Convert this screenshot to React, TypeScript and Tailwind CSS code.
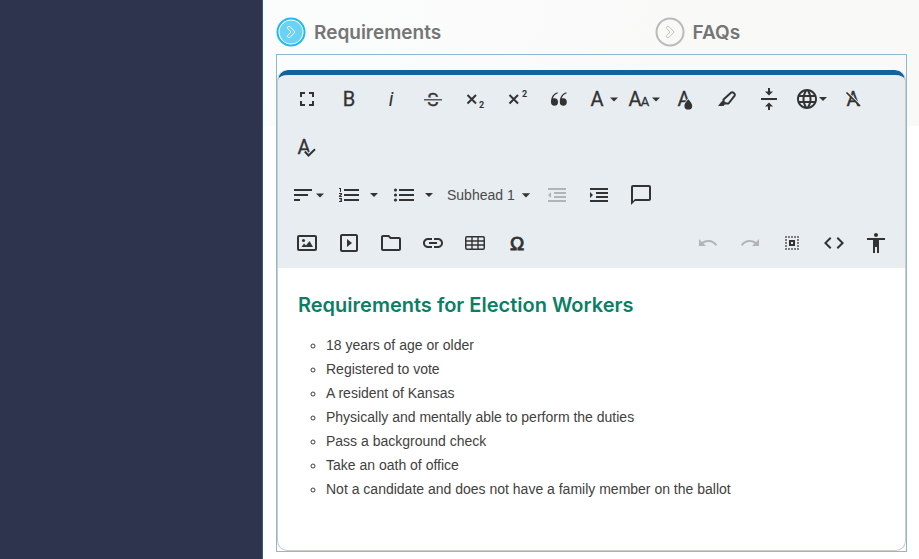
import type { ReactNode } from 'react';
import clsx from 'clsx';
import {
  MdAccessibility,
  MdArrowDropDown,
  MdCode,
  MdFullscreen,
  MdLanguage,
  MdLink,
  MdOutlineChatBubbleOutline,
  MdOutlineFolder,
} from 'react-icons/md';

const requirements = [
  '18 years of age or older',
  'Registered to vote',
  'A resident of Kansas',
  'Physically and mentally able to perform the duties',
  'Pass a background check',
  'Take an oath of office',
  'Not a candidate and does not have a family member on the ballot',
];

function Svg({ children }: { children: ReactNode }) {
  return (
    <svg
      viewBox="0 0 24 24"
      className="h-6 w-6 shrink-0 overflow-visible font-['Roboto',sans-serif]"
      fill="currentColor"
      aria-hidden="true"
    >
      {children}
    </svg>
  );
}

type LetterProps = { x: number; y?: number; size?: number; children: string };

// Regular weight with a hairline stroke sits between Roboto 400 and 500
function Letter({ x, y = 19, size = 20, children }: LetterProps) {
  return (
    <text x={x} y={y} fontSize={size} textAnchor="middle" stroke="currentColor" strokeWidth="0.3">
      {children}
    </text>
  );
}

const BoldIcon = () => (
  <Svg>
    <Letter x={12}>B</Letter>
  </Svg>
);

const ItalicIcon = () => (
  <Svg>
    <text x="12" y="19" fontSize="20" fontStyle="italic" textAnchor="middle">i</text>
  </Svg>
);

const StrikeIcon = () => (
  <Svg>
    <Letter x={12} size={19}>S</Letter>
    <path d="M3 10.500h18v4.500H3z" fill="#e8edf1" />
    <path d="M3 12h18v1.500H3z" opacity=".8" />
  </Svg>
);

const SubscriptIcon = () => (
  <Svg>
    <path d="M4.500 8l8.500 8.500M13 8l-8.500 8.500" stroke="currentColor" strokeWidth="2" />
    <text x="18.500" y="21" fontSize="9" fontWeight="700" textAnchor="middle">2</text>
  </Svg>
);

const SuperscriptIcon = () => (
  <Svg>
    <path d="M4.500 8l8.500 8.500M13 8l-8.500 8.500" stroke="currentColor" strokeWidth="2" />
    <text x="19.500" y="9.500" fontSize="9" fontWeight="700" textAnchor="middle">2</text>
  </Svg>
);

const QuoteIcon = () => (
  <Svg>
    <path d="M10.600 5.200C6.500 6.300 4 9.800 4 15a3.500 3.800 0 1 0 3.500-3.800c-.6 0-1 .1-1.500.3.500-2.300 2.100-4.200 4.800-5.200z" />
    <path d="M19.400 5.200c-4.100 1.100-6.600 4.600-6.600 9.800a3.500 3.800 0 1 0 3.500-3.800c-.6 0-1 .1-1.500.3.500-2.300 2.100-4.200 4.800-5.200z" />
  </Svg>
);

const FontFamilyIcon = () => (
  <Svg>
    <Letter x={8}>A</Letter>
    <path d="M21 10.500h8l-4 4z" />
  </Svg>
);

const FontSizeIcon = () => (
  <Svg>
    <Letter x={4}>A</Letter>
    <Letter x={14} size={13}>A</Letter>
    <path d="M21 10.500h8l-4 4z" />
  </Svg>
);

const TextColorIcon = () => (
  <Svg>
    <Letter x={11}>A</Letter>
    <path
      d="M15.300 12.200c2.200 2.500 3.900 4.500 3.900 6.500a3.900 3.900 0 0 1-7.800 0c0-2 1.700-4 3.900-6.500z"
      stroke="#e8edf1"
      strokeWidth="1.500"
      paintOrder="stroke"
    />
  </Svg>
);

const HighlightIcon = () => (
  <Svg>
    <path
      d="M8.500 12.500L16.200 5.600q1.200-.9 2.300.1l.9.900q1 1.100.1 2.300L13.500 16.500H10.500L8.500 14.500z"
      fill="none"
      stroke="currentColor"
      strokeWidth="2"
      strokeLinejoin="round"
    />
    <path d="M7.200 13.800L10.200 17 8.500 19H3z" />
  </Svg>
);

const LineHeightIcon = () => (
  <Svg>
    <path d="M4 11h16v2H4zM11 1h2v3.500h3L12 8.500 8 4.500h3zM11 23h2v-3.500h3l-4-4-4 4h3z" />
  </Svg>
);

const ClearFormatIcon = () => (
  <Svg>
    <Letter x={12}>A</Letter>
    <path d="M6.800 5.200L20.300 18.700" stroke="#e8edf1" strokeWidth="1.200" />
    <path d="M5.500 5.500L19 19" stroke="currentColor" strokeWidth="1.700" />
  </Svg>
);

const SpellcheckIcon = () => (
  <Svg>
    <Letter x={9}>A</Letter>
    <path d="M9.800 16.500l3.700 4L20 14.300" fill="none" stroke="#e8edf1" strokeWidth="4" />
    <path d="M9.800 16.500l3.700 4L20 14.300" fill="none" stroke="currentColor" strokeWidth="2" />
  </Svg>
);

const AlignIcon = () => (
  <Svg>
    <path d="M-1 6h18v2H-1zM-1 11h14v2H-1zM-1 16h6v2h-6z" />
    <path d="M21 10.500h8l-4 4z" />
  </Svg>
);

const OrderedListIcon = () => (
  <Svg>
    <path d="M7 6h15v2H7zM7 11h15v2H7zM7 16h15v2H7z" />
    <path d="M2 5h2v4H3V6H2zM2 10h3v1.500L3.500 13H5v1H2v-1.200L3.800 11H2zM2 15h3v4H2v-1h2v-.5H3v-1h1V16H2z" />
  </Svg>
);

const BulletListIcon = () => (
  <Svg>
    <path d="M7 6h15v2H7zM7 11h15v2H7zM7 16h15v2H7z" />
    <circle cx="3.500" cy="7" r="1.600" />
    <circle cx="3.500" cy="12" r="1.600" />
    <circle cx="3.500" cy="17" r="1.600" />
  </Svg>
);

const OutdentIcon = () => (
  <Svg>
    <path d="M3 5h18v2H3zM9 9h12v2H9zM9 13h12v2H9zM3 17h18v2H3zM6 9v6l-3-3z" />
  </Svg>
);

const IndentIcon = () => (
  <Svg>
    <path d="M3 5h18v2H3zM9 9h12v2H9zM9 13h12v2H9zM3 17h18v2H3zM3 9v6l3-3z" />
  </Svg>
);

const ImageIcon = () => (
  <Svg>
    <rect x="3" y="5" width="18" height="14" rx="1" fill="none" stroke="currentColor" strokeWidth="2" />
    <circle cx="8.500" cy="9.500" r="1.500" />
    <path d="M6.500 16l2.500-3.500 2 2 3.500-4.500L18 16z" />
  </Svg>
);

const VideoIcon = () => (
  <Svg>
    <rect x="4" y="4" width="16" height="16" rx="1" fill="none" stroke="currentColor" strokeWidth="2" />
    <path d="M10 8v8l5-4z" />
  </Svg>
);

const TableIcon = () => (
  <Svg>
    <rect x="2.750" y="5.750" width="18.500" height="12.500" rx="1.200" fill="none" stroke="currentColor" strokeWidth="1.500" />
    <path d="M3 10h18M3 14h18M9 6v12M15 6v12" stroke="currentColor" strokeWidth="1.400" />
  </Svg>
);

const OmegaIcon = () => (
  <Svg>
    <text
      x="12"
      y="19"
      fontSize="19"
      fontFamily="Liberation Sans, sans-serif"
      stroke="currentColor"
      strokeWidth="0.9"
      textAnchor="middle"
    >
      Ω
    </text>
  </Svg>
);

const UndoIcon = () => (
  <Svg>
    <path d="M3 8v7h7L7.400 12.500c1.400-1 3.100-1.600 4.900-1.600 3.100 0 5.800 1.600 7 3.900l1.900-.9C19.700 10.900 16.300 8.900 12.300 8.900c-2.400 0-4.700.8-6.500 2z" />
  </Svg>
);

const RedoIcon = () => (
  <Svg>
    <path d="M21 8v7h-7l2.600-2.500c-1.400-1-3.100-1.600-4.900-1.600-3.100 0-5.800 1.600-7 3.900l-1.900-.9C4.300 10.900 7.700 8.900 11.700 8.900c2.400 0 4.700.8 6.500 2z" />
  </Svg>
);

const SelectAllIcon = () => (
  <Svg>
    <path
      d="M5.200 6h14M5.200 18h14M6 8.200v8M18 8.200v8"
      stroke="currentColor"
      strokeWidth="1.600"
      strokeDasharray="1.6 1.4"
    />
    <rect x="10" y="10" width="4" height="4" fill="none" stroke="currentColor" strokeWidth="2" />
  </Svg>
);

type ToolProps = { label: string; children: ReactNode; disabled?: boolean };

function Tool({ label, children, disabled }: ToolProps) {
  return (
    <button
      type="button"
      title={label}
      aria-label={label}
      disabled={disabled}
      className={clsx(
        'flex h-12 w-[42px] shrink-0 items-center justify-center',
        disabled ? 'text-[#b1b5b8]' : 'text-[#333333]',
      )}
    >
      {children}
    </button>
  );
}

function DropArrow({ label }: { label: string }) {
  return (
    <button type="button" aria-label={label} className="flex h-12 w-[13px] items-center justify-start text-[#333333]">
      <svg viewBox="0 0 8 4" className="h-1 w-2 shrink-0" fill="currentColor" aria-hidden="true">
        <path d="M0 0h8L4 4z" />
      </svg>
    </button>
  );
}

function Tab({ label, active }: { label: string; active?: boolean }) {
  return (
    <button type="button" role="tab" aria-selected={!!active} className="flex items-center gap-2 text-left">
      <svg viewBox="0 0 30 30" className="h-[30px] w-[30px]" aria-hidden="true">
        <circle cx="15" cy="15" r="13.500" fill={active ? '#fff' : 'none'} stroke={active ? '#22b9ec' : '#bbb'} strokeWidth="2" />
        {active && <circle cx="15" cy="15" r="11.500" fill="#6ad2f5" />}
        <path
          d="M11.500 10.200q1.400-2 3 0l4.500 4.800-4.500 4.800q-1.600 2-3 0-.4-.8.300-1.500L15 15l-3.200-3.300q-.7-.7-.3-1.500z"
          fill="none"
          stroke={active ? '#fff' : '#c4c4c4'}
          strokeWidth="1"
        />
      </svg>
      <span className="pt-0.5 text-[19px] leading-7 font-semibold text-[#757575]">{label}</span>
    </button>
  );
}

export default function App() {
  return (
    <div className="flex min-h-screen bg-white font-['Liberation_Sans',Arial,sans-serif]">
      <aside className="w-[263px] shrink-0 border-r border-[#2c5f85] bg-[#2e344e]" />

      <main className="min-w-0 flex-1 bg-[linear-gradient(100deg,#fbfdfd,#f9f9f8_60%)] bg-[length:100%_126px] bg-no-repeat pt-[17px] pr-3 pb-[7px] pl-[13px]">
        <div role="tablist" className="grid grid-cols-5 font-['Inter',sans-serif]">
          <div className="col-span-3 flex">
            <Tab label="Requirements" active />
          </div>
          <div className="col-span-2 flex">
            <Tab label="FAQs" />
          </div>
        </div>

        <section className="mt-[7px] border border-[#8fb7d0] pt-[15px]">
          <div className="overflow-hidden rounded-[10px] border-x border-b border-[#cccccc] bg-white">
            {/* Toolbar */}
            <div role="toolbar" className="rounded-t-[10px] border-t-[5px] border-[#11629f] bg-[#e8edf1] px-2 pb-px">
              <div className="flex flex-wrap">
                <Tool label="Fullscreen"><MdFullscreen size={24} /></Tool>
                <Tool label="Bold"><BoldIcon /></Tool>
                <Tool label="Italic"><ItalicIcon /></Tool>
                <Tool label="Strikethrough"><StrikeIcon /></Tool>
                <Tool label="Subscript"><SubscriptIcon /></Tool>
                <Tool label="Superscript"><SuperscriptIcon /></Tool>
                <Tool label="Quote"><QuoteIcon /></Tool>
                <Tool label="Font Family"><FontFamilyIcon /></Tool>
                <Tool label="Font Size"><FontSizeIcon /></Tool>
                <Tool label="Text Color"><TextColorIcon /></Tool>
                <Tool label="Background Color"><HighlightIcon /></Tool>
                <Tool label="Line Height"><LineHeightIcon /></Tool>
                <Tool label="Language">
                  <MdLanguage size={24} className="shrink-0" />
                  <svg viewBox="0 0 8 4" className="h-1 w-2 shrink-0" fill="currentColor" aria-hidden="true">
                    <path d="M0 0h8L4 4z" />
                  </svg>
                </Tool>
                <Tool label="Clear Formatting"><ClearFormatIcon /></Tool>
                <Tool label="Spell Checker"><SpellcheckIcon /></Tool>
              </div>

              <div className="flex flex-wrap items-center">
                <Tool label="Align"><AlignIcon /></Tool>
                <Tool label="Ordered List"><OrderedListIcon /></Tool>
                <DropArrow label="Ordered list styles" />
                <Tool label="Unordered List"><BulletListIcon /></Tool>
                <DropArrow label="Unordered list styles" />
                <div className="grid w-[98px] items-center">
                  <select
                    aria-label="Paragraph Format"
                    defaultValue="Subhead 1"
                    className="col-start-1 row-start-1 h-12 appearance-none bg-transparent pl-[9px] text-sm text-[#4a4a4a]"
                  >
                    <option>Subhead 1</option>
                  </select>
                  <MdArrowDropDown size={20} className="pointer-events-none col-start-1 row-start-1 justify-self-end text-[#333333]" />
                </div>
                <Tool label="Decrease Indent" disabled><OutdentIcon /></Tool>
                <Tool label="Increase Indent"><IndentIcon /></Tool>
                <Tool label="Comment"><MdOutlineChatBubbleOutline size={24} /></Tool>
              </div>

              <div className="flex flex-wrap justify-between">
                <div className="flex">
                  <Tool label="Insert Image"><ImageIcon /></Tool>
                  <Tool label="Insert Video"><VideoIcon /></Tool>
                  <Tool label="Insert File"><MdOutlineFolder size={24} /></Tool>
                  <Tool label="Insert Link"><MdLink size={24} /></Tool>
                  <Tool label="Insert Table"><TableIcon /></Tool>
                  <Tool label="Special Characters"><OmegaIcon /></Tool>
                </div>
                <div className="flex">
                  <Tool label="Undo" disabled><UndoIcon /></Tool>
                  <Tool label="Redo" disabled><RedoIcon /></Tool>
                  <Tool label="Select All"><SelectAllIcon /></Tool>
                  <Tool label="Code View"><MdCode size={24} /></Tool>
                  <Tool label="Accessibility"><MdAccessibility size={24} /></Tool>
                </div>
              </div>
            </div>

            {/* Content */}
            <div className="px-5 pt-[23px] pb-[49px]">
              <h2 className="font-['Inter',sans-serif] text-[20px] leading-7 font-semibold text-[#0b7f66]">
                Requirements for Election Workers
              </h2>
              <ul className="mt-3.5 list-[circle] pl-7 text-sm leading-6 text-[#414141]">
                {requirements.map((item) => (
                  <li key={item}>{item}</li>
                ))}
              </ul>
            </div>
          </div>
        </section>
      </main>
    </div>
  );
}
